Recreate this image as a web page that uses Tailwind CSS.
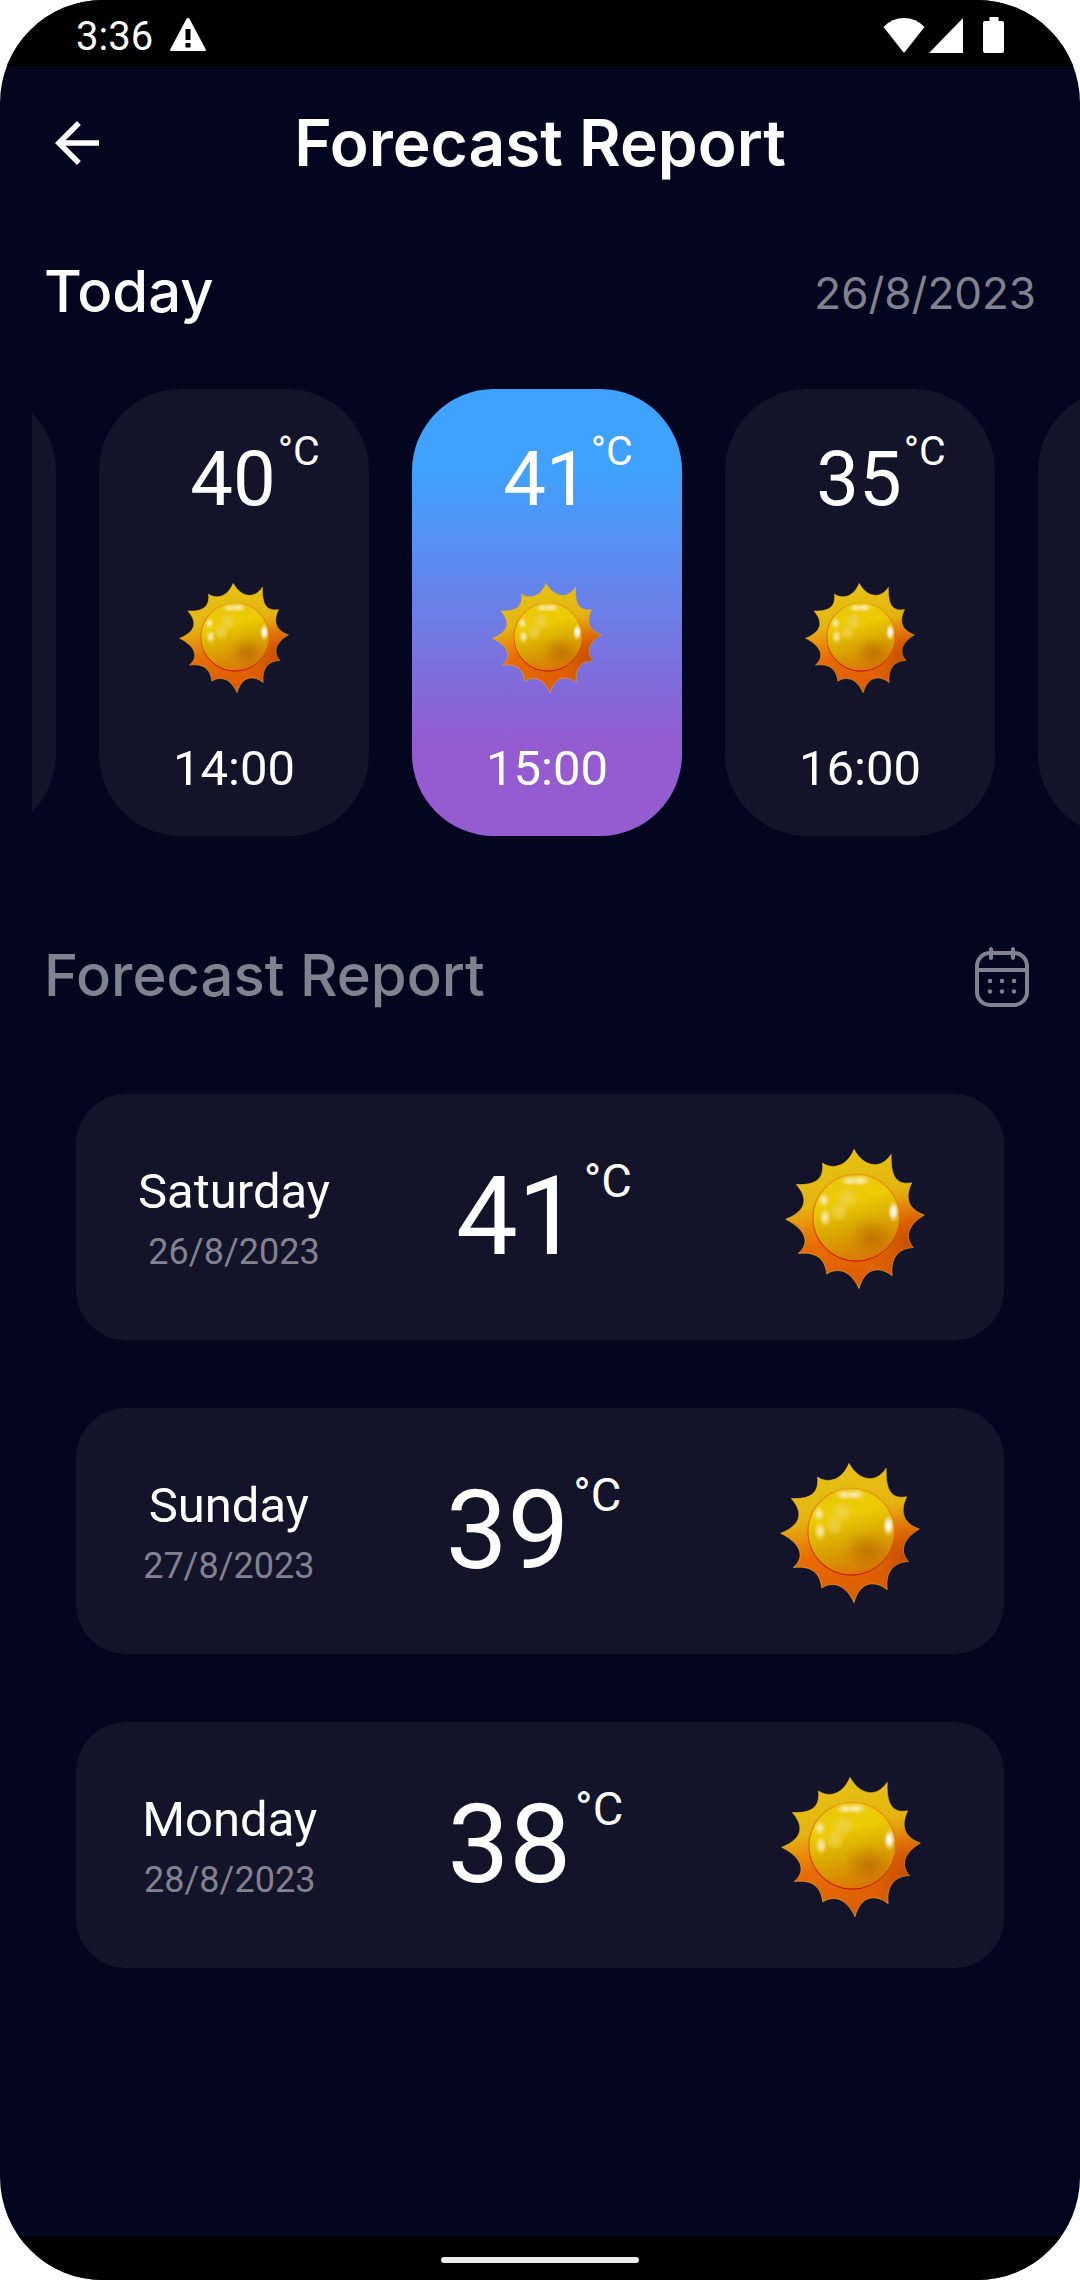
<!DOCTYPE html>
<html lang="en">
<head>
<meta charset="utf-8">
<meta name="viewport" content="width=device-width, initial-scale=1">
<title>Forecast Report</title>
<script src="https://cdn.jsdelivr.net/npm/@tailwindcss/browser@4"></script>
</head>
<body class="bg-white">

<!-- Shared sun artwork -->
<svg class="absolute size-0" aria-hidden="true">
  <defs>
    <linearGradient id="ray" x1="0.4" y1="0" x2="0.6" y2="1">
      <stop offset="0" stop-color="#e6c412"/>
      <stop offset="0.35" stop-color="#e4b410"/>
      <stop offset="0.5" stop-color="#e8880c"/>
      <stop offset="0.62" stop-color="#e86c02"/>
      <stop offset="1" stop-color="#dc5a04"/>
    </linearGradient>
    <radialGradient id="shade" cx="0.92" cy="0.68" r="0.34">
      <stop offset="0" stop-color="#b03c00" stop-opacity="0.6"/>
      <stop offset="1" stop-color="#c04400" stop-opacity="0"/>
    </radialGradient>
    <linearGradient id="rim" x1="0" y1="0" x2="0" y2="1">
      <stop offset="0" stop-color="#e8a010"/>
      <stop offset="0.5" stop-color="#e66a08"/>
      <stop offset="1" stop-color="#cc1500"/>
    </linearGradient>
    <linearGradient id="ball" x1="0.35" y1="0" x2="0.6" y2="1">
      <stop offset="0" stop-color="#e9c70a"/>
      <stop offset="0.3" stop-color="#eccb04"/>
      <stop offset="0.55" stop-color="#dcae02"/>
      <stop offset="0.8" stop-color="#d88e04"/>
      <stop offset="1" stop-color="#dc7206"/>
    </linearGradient>
    <radialGradient id="dark">
      <stop offset="0" stop-color="#b06000" stop-opacity="0.6"/>
      <stop offset="0.5" stop-color="#b86c00" stop-opacity="0.35"/>
      <stop offset="1" stop-color="#c88a00" stop-opacity="0"/>
    </radialGradient>
    <radialGradient id="glow">
      <stop offset="0" stop-color="#fff6e0" stop-opacity="0.85"/>
      <stop offset="0.5" stop-color="#fbe9b0" stop-opacity="0.55"/>
      <stop offset="1" stop-color="#f3d860" stop-opacity="0"/>
    </radialGradient>
    <radialGradient id="flare">
      <stop offset="0" stop-color="#ffffff"/>
      <stop offset="0.45" stop-color="#f4efe8" stop-opacity="0.85"/>
      <stop offset="1" stop-color="#f3d860" stop-opacity="0"/>
    </radialGradient>
    <radialGradient id="soft">
      <stop offset="0" stop-color="#f0d45c" stop-opacity="0.75"/>
      <stop offset="0.6" stop-color="#efd050" stop-opacity="0.5"/>
      <stop offset="1" stop-color="#eccb30" stop-opacity="0"/>
    </radialGradient>
    <symbol id="sun" viewBox="46 56 420 422">
      <path fill="url(#ray)" stroke="#e9b030" stroke-width="2" stroke-linejoin="round" d="M253 57C283 112 335 119 365 72C364 128 374 167 427 158C405 203 416 238 465 255C410 288 407 325 432 353C385 355 362 386 368 438C335 411 287 408 268 477C238 409 190 418 171 433C166 392 146 364 85 371C120 342 112 300 47 268C116 240 112 200 79 163C135 166 164 148 158 98C186 118 231 112 253 57Z"/>
      <path fill="url(#shade)" d="M253 57C283 112 335 119 365 72C364 128 374 167 427 158C405 203 416 238 465 255C410 288 407 325 432 353C385 355 362 386 368 438C335 411 287 408 268 477C238 409 190 418 171 433C166 392 146 364 85 371C120 342 112 300 47 268C116 240 112 200 79 163C135 166 164 148 158 98C186 118 231 112 253 57Z"/>
      <circle cx="260" cy="263" r="131" fill="url(#ball)" stroke="url(#rim)" stroke-width="4"/>
      <ellipse cx="308" cy="322" rx="80" ry="68" fill="url(#dark)"/>
      <ellipse cx="232" cy="203" rx="34" ry="36" fill="url(#soft)"/>
      <ellipse cx="208" cy="244" rx="30" ry="34" fill="url(#soft)"/>
      <ellipse cx="240" cy="152" rx="32" ry="17" fill="url(#glow)"/>
      <ellipse cx="272" cy="151" rx="34" ry="18" fill="url(#glow)"/>
      <ellipse cx="162" cy="210" rx="20" ry="24" fill="url(#glow)"/>
      <ellipse cx="166" cy="262" rx="20" ry="30" fill="url(#glow)"/>
      <ellipse cx="372" cy="245" rx="18" ry="34" fill="url(#flare)"/>
    </symbol>
  </defs>
</svg>

<div class="flex min-h-screen flex-col overflow-hidden rounded-[103px] bg-[#040620] font-[Roboto,sans-serif] text-white">

  <!-- Status bar -->
  <div class="flex h-[66px] items-center justify-between bg-black px-[76px]">
    <div class="flex items-center gap-4 pt-1">
      <span class="pt-1 text-[40px] leading-[48px]">3:36</span>
      <svg class="h-[34px] w-[38px]" viewBox="0 0 38 34" fill="#fff" role="img" aria-label="Warning"><path fill-rule="evenodd" d="M19 0q1 0 1.600 1L36.800 31.500q.6 1.500-1 1.500H2.200q-1.600 0-1-1.500L17.400 1Q18 0 19 0ZM16.500 11v11h5V11ZM16.500 25v4.500h5V25Z"/></svg>
    </div>
    <div class="flex items-center gap-1 pt-1">
      <svg class="h-9 w-[42px]" viewBox="0 0 42 36" fill="#fff" role="img" aria-label="Wi-Fi"><path d="M21 36 .5 10Q9 1 21 1t20.500 9Z"/></svg>
      <svg class="mr-4 h-9 w-[34px]" viewBox="0 0 34 36" fill="#fff" role="img" aria-label="Signal"><path d="M34 1v35H0Z"/></svg>
      <svg class="h-9 w-[21px]" viewBox="0 0 21 36" fill="#fff" role="img" aria-label="Battery"><path d="M6.500 0h9v4H19q2 0 2 2v28q0 2-2 2H2q-2 0-2-2V6q0-2 2-2h4.500Z"/></svg>
    </div>
  </div>

  <!-- App bar -->
  <header class="grid h-[154px] grid-cols-[66px_1fr_66px] items-center px-11">
    <button type="button" aria-label="Back" class="size-[66px]">
      <svg class="size-full" viewBox="0 0 24 24" fill="#fff"><path d="M20 11H7.830l5.590-5.590L12 4l-8 8 8 8 1.410-1.410L7.830 13H20v-2z"/></svg>
    </button>
    <h1 class="text-center font-[Inter,sans-serif] text-[64px] leading-[72px] font-semibold">Forecast Report</h1>
  </header>

  <main class="flex-1">
    <section>
      <div class="mt-[39px] flex items-center justify-between px-11 font-[Inter,sans-serif]">
        <h2 class="text-[58px] leading-[64px] font-medium">Today</h2>
        <time datetime="2023-08-26" class="pt-1 text-[44px] leading-[60px] text-[#82828f]">26/8/2023</time>
      </div>

      <div class="mt-[66px] ml-8 overflow-hidden">
        <div class="-ml-[246px] flex gap-[43px]">
          <div class="w-[270px] shrink-0 rounded-[82px] bg-[#131329]"></div>

          <article class="flex w-[270px] shrink-0 flex-col items-center rounded-[82px] bg-[#131329] pt-[42px] pb-[39px]">
            <p class="flex items-start gap-0.5 pl-[42px]"><span class="mt-2 text-[76px] leading-[80px]">40</span><span class="text-[41px] leading-[40px]">°C</span></p>
            <svg class="mt-16 size-[110px]" role="img" aria-label="Sunny"><use href="#sun"/></svg>
            <p class="mt-12 text-[49px] leading-[56px]">14:00</p>
          </article>

          <article class="flex w-[270px] shrink-0 flex-col items-center rounded-[82px] bg-linear-to-b/srgb from-[#3fa2fe] from-18% to-[#955bd0] to-80% pt-[42px] pb-[39px]">
            <p class="flex items-start gap-0.5 pl-[42px]"><span class="mt-2 text-[76px] leading-[80px]">41</span><span class="text-[41px] leading-[40px]">°C</span></p>
            <svg class="mt-16 size-[110px]" role="img" aria-label="Sunny"><use href="#sun"/></svg>
            <p class="mt-12 text-[49px] leading-[56px]">15:00</p>
          </article>

          <article class="flex w-[270px] shrink-0 flex-col items-center rounded-[82px] bg-[#131329] pt-[42px] pb-[39px]">
            <p class="flex items-start gap-0.5 pl-[42px]"><span class="mt-2 text-[76px] leading-[80px]">35</span><span class="text-[41px] leading-[40px]">°C</span></p>
            <svg class="mt-16 size-[110px]" role="img" aria-label="Sunny"><use href="#sun"/></svg>
            <p class="mt-12 text-[49px] leading-[56px]">16:00</p>
          </article>

          <div class="w-[270px] shrink-0 rounded-[82px] bg-[#131329]"></div>
        </div>
      </div>
    </section>

    <section>
      <div class="mt-[107px] flex items-center justify-between px-11">
        <h2 class="font-[Inter,sans-serif] text-[58px] leading-[64px] font-medium text-[#82828f]">Forecast Report</h2>
        <button type="button" aria-label="Pick a date" class="mt-1 mr-1 size-[60px] text-[#82828f]">
          <svg class="size-full" viewBox="0 0 60 60" fill="none" stroke="currentColor" stroke-width="4">
            <rect x="5" y="6" width="50" height="52" rx="13"/>
            <path d="M5 23h50M19 2v9M41 2v9" stroke-linecap="round"/>
            <g fill="currentColor" stroke="none"><circle cx="18" cy="34" r="2.200"/><circle cx="30" cy="34" r="2.200"/><circle cx="42" cy="34" r="2.200"/><circle cx="18" cy="44.500" r="2.200"/><circle cx="30" cy="44.500" r="2.200"/><circle cx="42" cy="44.500" r="2.200"/></g>
          </svg>
        </button>
      </div>

      <ul class="mx-[76px] mt-[87px] flex flex-col gap-[68px]">
        <li class="flex items-center justify-evenly rounded-[50px] bg-[#131329] py-[51px]">
          <div class="flex flex-col items-center gap-2.5 pt-1">
            <h3 class="text-[49px] leading-[56px]">Saturday</h3>
            <time datetime="2023-08-26" class="text-[36px] leading-[44px] text-[#82828f]">26/8/2023</time>
          </div>
          <p class="flex w-[314px] items-start gap-1 pl-16"><span class="text-[110px] leading-[120px]">41</span><span class="text-[47px] leading-[48px]">°C</span></p>
          <div class="flex w-[174px] justify-center pt-1"><svg class="size-[140px]" role="img" aria-label="Sunny"><use href="#sun"/></svg></div>
        </li>
        <li class="flex items-center justify-evenly rounded-[50px] bg-[#131329] py-[51px]">
          <div class="flex flex-col items-center gap-2.5 pt-1">
            <h3 class="text-[49px] leading-[56px]">Sunday</h3>
            <time datetime="2023-08-27" class="text-[36px] leading-[44px] text-[#82828f]">27/8/2023</time>
          </div>
          <p class="flex w-[314px] items-start gap-1 pl-16"><span class="text-[110px] leading-[120px]">39</span><span class="text-[47px] leading-[48px]">°C</span></p>
          <div class="flex w-[174px] justify-center pt-1"><svg class="size-[140px]" role="img" aria-label="Sunny"><use href="#sun"/></svg></div>
        </li>
        <li class="flex items-center justify-evenly rounded-[50px] bg-[#131329] py-[51px]">
          <div class="flex flex-col items-center gap-2.5 pt-1">
            <h3 class="text-[49px] leading-[56px]">Monday</h3>
            <time datetime="2023-08-28" class="text-[36px] leading-[44px] text-[#82828f]">28/8/2023</time>
          </div>
          <p class="flex w-[314px] items-start gap-1 pl-16"><span class="text-[110px] leading-[120px]">38</span><span class="text-[47px] leading-[48px]">°C</span></p>
          <div class="flex w-[174px] justify-center pt-1"><svg class="size-[140px]" role="img" aria-label="Sunny"><use href="#sun"/></svg></div>
        </li>
      </ul>
    </section>
  </main>

  <!-- Gesture navigation -->
  <div class="flex h-11 items-center justify-center bg-black pt-1">
    <div class="h-1.5 w-[198px] rounded-full bg-[#ececec]"></div>
  </div>
</div>
</body>
</html>
